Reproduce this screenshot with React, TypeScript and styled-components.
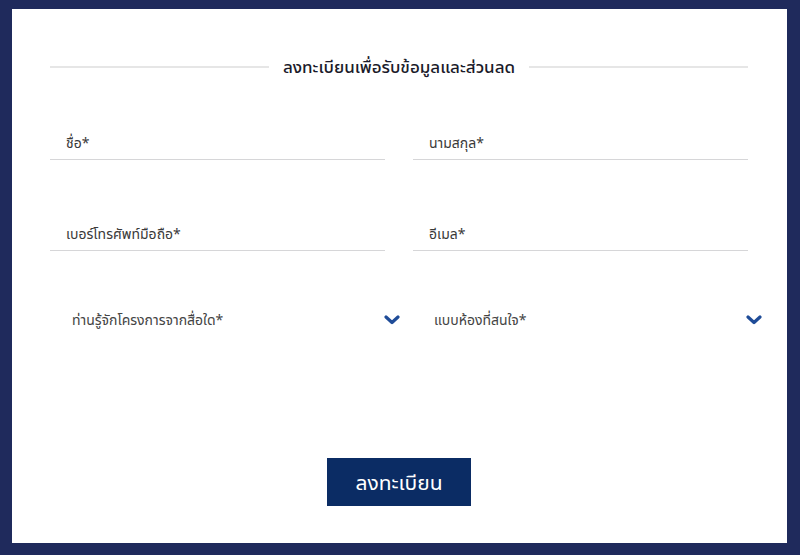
import React from 'react';
import styled, { createGlobalStyle } from 'styled-components';

const GlobalStyle = createGlobalStyle`
  html, body {
    margin: 0;
    padding: 0;
    background: #1f2a5c;
  }
  body {
    font-family: "Noto Sans Thai UI", "Noto Sans Thai", "Noto Sans", "Liberation Sans", sans-serif;
  }
`;

const Page = styled.div`
  padding: 9px 13px 12px 12px;
`;

const Card = styled.form`
  background: #fff;
  height: 534px;
  box-sizing: border-box;
  padding: 46px 39px 0 38px;
  display: flex;
  flex-direction: column;
`;

const TitleRow = styled.div`
  display: flex;
  align-items: center;
  gap: 14px;
`;

const Rule = styled.span`
  flex: 1;
  height: 2px;
  background: #e6e6e6;
`;

const Title = styled.h2`
  margin: 0;
  font-size: 17px;
  font-weight: 500;
  color: #1b1b2a;
  white-space: nowrap;
`;

const Grid = styled.div`
  display: grid;
  grid-template-columns: 1fr 1fr;
  column-gap: 28px;
  row-gap: 62px;
  margin-top: 53px;
`;

const Field = styled.label`
  display: block;
  border-bottom: 1px solid #d6d6d8;
  padding: 0 0 4px 16px;
  font-size: 14px;
  color: #3a3a3a;
  height: 24px;
  line-height: 24px;
`;

const SelectRow = styled.div`
  display: grid;
  grid-template-columns: 1fr 1fr;
  column-gap: 17px;
  margin: 51px -19px 0 10px;
`;

const Select = styled.div`
  display: flex;
  align-items: center;
  justify-content: space-between;
  padding: 0 5px 0 12px;
  height: 36px;
  font-size: 14px;
  color: #444;
`;

const Chevron = () => (
  <svg width="16" height="10" viewBox="0 0 16 10">
    <path d="M2 2 L8 7.5 L14 2" fill="none" stroke="#1f4c98" strokeWidth="3.2" strokeLinecap="round" strokeLinejoin="round" />
  </svg>
);

const Actions = styled.div`
  display: flex;
  justify-content: center;
  margin-top: 120px;
`;

const Submit = styled.button`
  width: 144px;
  height: 48px;
  border: none;
  background: #0b2c64;
  color: #fff;
  font-family: inherit;
  font-size: 21px;
  cursor: pointer;
`;

export default function App() {
  return (
    <>
      <GlobalStyle />
      <Page>
        <Card onSubmit={(e) => e.preventDefault()}>
          <TitleRow>
            <Rule />
            <Title>ลงทะเบียนเพื่อรับข้อมูลและส่วนลด</Title>
            <Rule />
          </TitleRow>
          <Grid>
            <Field>ชื่อ*</Field>
            <Field>นามสกุล*</Field>
            <Field>เบอร์โทรศัพท์มือถือ*</Field>
            <Field>อีเมล*</Field>
          </Grid>
          <SelectRow>
            <Select>
              ท่านรู้จักโครงการจากสื่อใด*
              <Chevron />
            </Select>
            <Select>
              แบบห้องที่สนใจ*
              <Chevron />
            </Select>
          </SelectRow>
          <Actions>
            <Submit type="submit">ลงทะเบียน</Submit>
          </Actions>
        </Card>
      </Page>
    </>
  );
}
